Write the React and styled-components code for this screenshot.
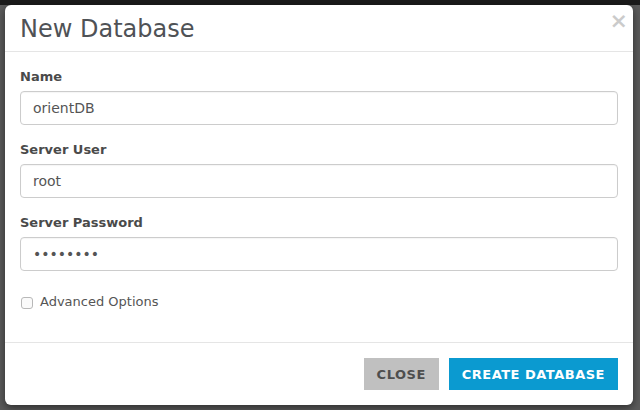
import styled, { createGlobalStyle } from 'styled-components';

const GlobalStyle = createGlobalStyle`
	html, body {
		margin: 0;
		padding: 0;
		height: 100%;
	}
	body {
		font-family: 'DejaVu Sans', 'Liberation Sans', sans-serif;
		background: #5b5b5b;
	}
`;

const Backdrop = styled.div`
	width: 640px;
	height: 410px;
	box-sizing: border-box;
	padding: 5px 7px 5px 5px;
	background: linear-gradient(#1b1b1b 0, #1b1b1b 5px, #5b5b5b 5px);
	overflow: hidden;
`;

const Modal = styled.div`
	width: 628px;
	height: 400px;
	box-sizing: border-box;
	background: #fff;
	border-radius: 6px;
	box-shadow: 0 3px 9px rgba(0, 0, 0, 0.5);
	display: flex;
	flex-direction: column;
`;

const Header = styled.div`
	display: flex;
	justify-content: space-between;
	align-items: flex-start;
	padding: 11px 15px 9px;
	border-bottom: 1px solid #e5e5e5;
`;

const Title = styled.h4`
	margin: 0;
	font-size: 24px;
	line-height: 26px;
	font-weight: normal;
	color: #4f5256;
`;

const CloseX = styled.button`
	border: 0;
	background: none;
	padding: 0;
	margin: -6px -10px 0 0;
	font-family: 'DejaVu Sans', sans-serif;
	font-size: 22px;
	font-weight: bold;
	line-height: 1;
	color: #000;
	opacity: 0.2;
	cursor: pointer;
`;

const Body = styled.div`
	flex: 1;
	padding: 16px 15px 0;
`;

const Group = styled.div`
	margin-bottom: 16px;
`;

const Label = styled.label`
	display: block;
	font-size: 13px;
	line-height: 18px;
	font-weight: bold;
	color: #4a4a4a;
	margin-bottom: 5px;
`;

const Input = styled.input`
	display: block;
	width: 100%;
	height: 34px;
	box-sizing: border-box;
	padding: 6px 12px;
	font-family: 'DejaVu Sans', sans-serif;
	font-size: 14px;
	color: #555;
	border: 1px solid #ccc;
	border-radius: 4px;
	background: #fff;
	box-shadow: inset 0 1px 1px rgba(0, 0, 0, 0.04);
	outline: none;
`;

const CheckRow = styled.label`
	display: flex;
	align-items: center;
	gap: 7px;
	margin-top: 22px;
	font-size: 13px;
	line-height: 18px;
	color: #555;
	padding-left: 1px;
`;

const Box = styled.span`
	width: 10px;
	height: 10px;
	border: 1px solid #b8b8b8;
	border-radius: 3px;
	background: #fafafa;
	margin-top: 2px;
`;

const Footer = styled.div`
	display: flex;
	justify-content: flex-end;
	gap: 10px;
	padding: 15px;
	border-top: 1px solid #e5e5e5;
`;

const Button = styled.button`
	height: 32px;
	padding: 0 13px;
	border: 0;
	border-radius: 0;
	font-family: 'DejaVu Sans', sans-serif;
	font-size: 13px;
	font-weight: bold;
	letter-spacing: 0.5px;
	text-transform: uppercase;
	cursor: pointer;
	background: ${(p) => (p.$primary ? '#0b9ad0' : '#c0c0c0')};
	color: ${(p) => (p.$primary ? '#fff' : '#4e4e4e')};
`;

export default function App() {
	return (
		<>
			<GlobalStyle />
			<Backdrop>
				<Modal>
					<Header>
						<Title>New Database</Title>
						<CloseX>×</CloseX>
					</Header>
					<Body>
						<Group>
							<Label>Name</Label>
							<Input defaultValue="orientDB" />
						</Group>
						<Group>
							<Label>Server User</Label>
							<Input defaultValue="root" />
						</Group>
						<Group>
							<Label>Server Password</Label>
							<Input type="password" defaultValue="password" />
						</Group>
						<CheckRow>
							<Box />
							Advanced Options
						</CheckRow>
					</Body>
					<Footer>
						<Button>Close</Button>
						<Button $primary>Create Database</Button>
					</Footer>
				</Modal>
			</Backdrop>
		</>
	);
}
